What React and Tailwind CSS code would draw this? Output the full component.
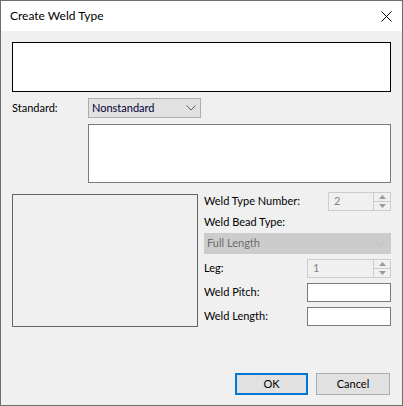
const Chevron = ({ color = '#5f5f5f' }) => (
  <svg width="10" height="6" viewBox="0 0 10 6" className="shrink-0">
    <polyline points="0.5,0.5 5,5 9.5,0.5" fill="none" stroke={color} strokeWidth="1" />
  </svg>
);

const SpinBox = ({ value, width }) => (
  <div className={`flex h-[19px] ${width} border border-[#cccccc] bg-[#f0f0f0]`}>
    <div className="flex-1 flex items-center pl-[5px] text-[#838383]">{value}</div>
    <div className="w-[17px] flex flex-col border-l border-[#cccccc]">
      <div className="flex-1 flex items-center justify-center border-b border-[#cccccc] bg-[#f0f0f0]">
        <svg width="7" height="4" viewBox="0 0 7 4"><polygon points="3.5,0 7,4 0,4" fill="#9a9a9a" /></svg>
      </div>
      <div className="flex-1 flex items-center justify-center bg-[#f0f0f0]">
        <svg width="7" height="4" viewBox="0 0 7 4"><polygon points="0,0 7,0 3.5,4" fill="#9a9a9a" /></svg>
      </div>
    </div>
  </div>
);

const Field = ({ label, children }) => (
  <div className="flex items-center justify-between h-[19px]">
    <span>{label}</span>
    {children}
  </div>
);

export default function App() {
  return (
    <div
      className="w-[403px] h-[406px] border border-[#6f6f6f] bg-[#f0f0f0] flex flex-col text-[11px] text-black"
      style={{ fontFamily: 'Lato, "Liberation Sans", sans-serif' }}
    >
      {/* title bar */}
      <div className="h-[30px] bg-white flex items-center justify-between pl-[9px] pr-[10px]">
        <span className="text-[12px]">Create Weld Type</span>
        <svg width="11" height="11" viewBox="0 0 11 11">
          <path d="M0.5 0.5 L10.5 10.5 M10.5 0.5 L0.5 10.5" stroke="#000" strokeWidth="1" />
        </svg>
      </div>

      <div className="flex-1 px-[11px] flex flex-col">
        <div className="mt-[11px] h-[50px] border border-black bg-white" />

        <div className="mt-[6px] flex items-center h-[20px]">
          <span className="w-[76px]">Standard:</span>
          <div className="w-[113px] h-[20px] border border-[#adadad] bg-[#e1e1e1] flex items-center justify-between pl-[3px] pr-[4px] text-[#000033]">
            <span>Nonstandard</span>
            <Chevron />
          </div>
        </div>

        <div className="mt-[6px] ml-[76px] h-[59px] border border-[#7a7a7a] bg-white" />

        <div className="mt-[9px] flex">
          <div className="mt-[2px] w-[186px] h-[133px] border border-[#646464] shrink-0" />
          <div className="ml-[6px] flex-1 flex flex-col">
            <Field label="Weld Type Number:">
              <SpinBox value="2" width="w-[63px]" />
            </Field>
            <div className="h-[22px] flex items-center">Weld Bead Type:</div>
            <div className="h-[21px] bg-[#cccccc] flex items-center justify-between pl-[3px] pr-[5px] text-[#6d6d6d]">
              <span>Full Length</span>
              <Chevron color="#bcbcbc" />
            </div>
            <div className="mt-[5px]">
              <Field label="Leg:">
                <SpinBox value="1" width="w-[84px]" />
              </Field>
            </div>
            <div className="mt-[5px]">
              <Field label="Weld Pitch:">
                <div className="w-[84px] h-[19px] border border-[#7a7a7a] bg-white" />
              </Field>
            </div>
            <div className="mt-[5px]">
              <Field label="Weld Length:">
                <div className="w-[84px] h-[19px] border border-[#7a7a7a] bg-white" />
              </Field>
            </div>
          </div>
        </div>

        <div className="mt-[46px] flex justify-end gap-[8px] pr-[1px]">
          <button className="w-[73px] h-[22px] border-2 border-[#0078d7] bg-[#e1e1e1] flex items-center justify-center">
            OK
          </button>
          <button className="w-[74px] h-[22px] border border-[#adadad] bg-[#e1e1e1] flex items-center justify-center">
            Cancel
          </button>
        </div>
      </div>
    </div>
  );
}
